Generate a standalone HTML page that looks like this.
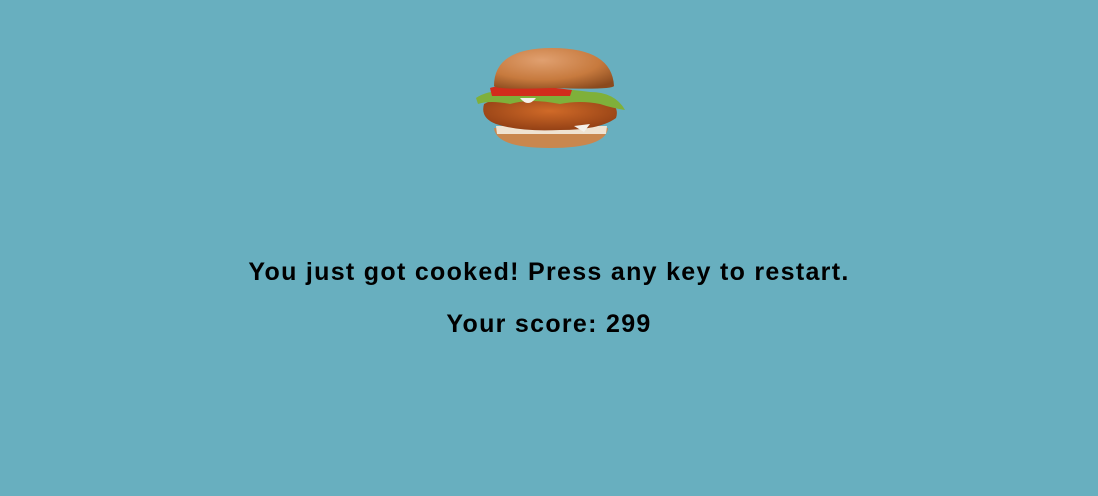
<!DOCTYPE html>
<html><head><style>
html,body{margin:0;padding:0;width:1098px;height:496px;background:#68afbf;overflow:hidden}
.t{position:absolute;left:0;width:1098px;text-align:center;font-family:"Liberation Sans",sans-serif;font-weight:bold;color:#000;font-size:25px;letter-spacing:1.3px}
</style></head><body>
<svg style="position:absolute;left:470px;top:40px" width="165" height="115" viewBox="470 40 165 115">
<defs>
<radialGradient id="bun" cx="0.4" cy="0.3" r="0.8"><stop offset="0" stop-color="#e0a070"/><stop offset="0.6" stop-color="#c77a3e"/><stop offset="1" stop-color="#8a4a1e"/></radialGradient>
<radialGradient id="pat" cx="0.5" cy="0.4" r="0.7"><stop offset="0" stop-color="#d06a28"/><stop offset="1" stop-color="#8a3a12"/></radialGradient>
</defs>
<path d="M494 128 Q496 148 550 148 Q606 148 608 128 Z" fill="#c9874e"/>
<path d="M496 126 L607 126 L606 134 L497 134 Z" fill="#efe3d2"/>
<path d="M484 104 Q480 118 496 124 Q520 132 560 130 Q600 130 616 118 Q620 106 606 100 L496 98 Z" fill="url(#pat)"/>
<path d="M476 98 Q490 88 520 92 Q550 86 590 92 Q615 92 625 110 Q612 108 600 104 Q580 100 560 104 Q530 98 510 104 Q490 100 478 104 Z" fill="#7fb03a"/>
<path d="M490 88 Q500 84 540 86 L572 90 L570 96 Q540 96 492 96 Z" fill="#d22d1c"/>
<path d="M520 98 Q528 108 536 98 Z M574 126 L584 132 L590 124 Z" fill="#f4f0ea"/>
<path d="M494 86 Q494 48 552 48 Q612 48 614 86 Q612 90 552 88 Q496 90 494 86 Z" fill="url(#bun)"/>
</svg>
<div class="t" style="top:258px">You just got cooked! Press any key to restart.</div>
<div class="t" style="top:310px">Your score: 299</div>
</body></html>
